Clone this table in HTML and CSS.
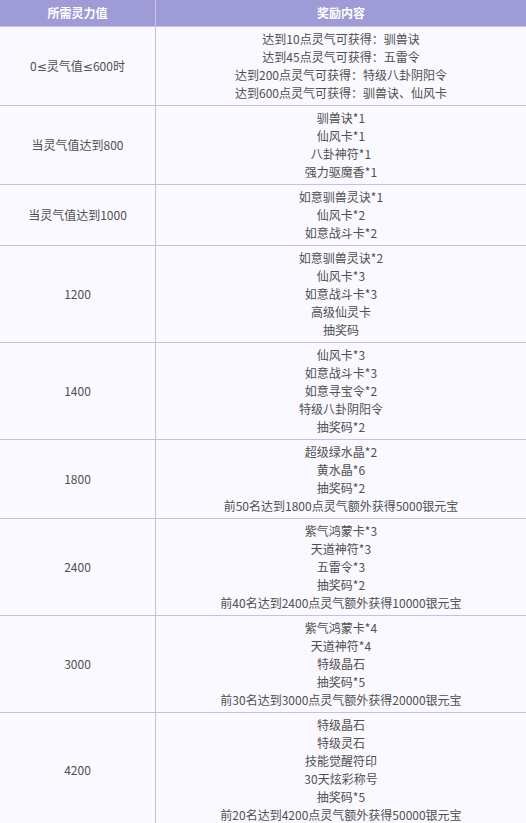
FILE: index.html
```html
<!DOCTYPE html>
<html lang="zh-CN">
<head>
<meta charset="utf-8">
<link rel="stylesheet" href="styles.css">
</head>
<body>
<table class="reward-table">
  <thead>
    <tr><th class="col-req">所需灵力值</th><th class="col-reward">奖励内容</th></tr>
  </thead>
  <tbody>
    <tr><td>0<span class="sym">≤</span>灵气值<span class="sym">≤</span>600时</td><td>达到10点灵气可获得：驯兽诀<br>达到45点灵气可获得：五雷令<br>达到200点灵气可获得：特级八卦阴阳令<br>达到600点灵气可获得：驯兽诀、仙风卡</td></tr>
    <tr><td>当灵气值达到800</td><td>驯兽诀*1<br>仙风卡*1<br>八卦神符*1<br>强力驱魔香*1</td></tr>
    <tr><td>当灵气值达到1000</td><td>如意驯兽灵诀*1<br>仙风卡*2<br>如意战斗卡*2</td></tr>
    <tr><td>1200</td><td>如意驯兽灵诀*2<br>仙风卡*3<br>如意战斗卡*3<br>高级仙灵卡<br>抽奖码</td></tr>
    <tr><td>1400</td><td>仙风卡*3<br>如意战斗卡*3<br>如意寻宝令*2<br>特级八卦阴阳令<br>抽奖码*2</td></tr>
    <tr><td>1800</td><td>超级绿水晶*2<br>黄水晶*6<br>抽奖码*2<br>前50名达到1800点灵气额外获得5000银元宝</td></tr>
    <tr><td>2400</td><td>紫气鸿蒙卡*3<br>天道神符*3<br>五雷令*3<br>抽奖码*2<br>前40名达到2400点灵气额外获得10000银元宝</td></tr>
    <tr><td>3000</td><td>紫气鸿蒙卡*4<br>天道神符*4<br>特级晶石<br>抽奖码*5<br>前30名达到3000点灵气额外获得20000银元宝</td></tr>
    <tr><td>4200</td><td>特级晶石<br>特级灵石<br>技能觉醒符印<br>30天炫彩称号<br>抽奖码*5<br>前20名达到4200点灵气额外获得50000银元宝</td></tr>
  </tbody>
</table>
</body>
</html>
```
FILE: styles.css
```css
html, body {
  margin: 0;
  padding: 0;
  background: #f9f9ff;
}
body {
  font-family: "Microsoft YaHei", "Noto Sans CJK SC", "Noto Sans", sans-serif;
  font-size: 12px;
  color: #505050;
}
.reward-table {
  width: 526px;
  border-collapse: collapse;
  table-layout: fixed;
}
.reward-table th {
  background: #9e9bd6;
  color: #fff;
  font-weight: bold;
  height: 26px;
  padding: 0;
  line-height: 26px;
  border-bottom: 1px solid #c6c4ec;
  text-align: center;
}
.reward-table th.col-req {
  width: 155px;
  border-right: 1px solid #c6c4ec;
}
.reward-table td {
  text-align: center;
  vertical-align: middle;
  padding: 3px 0;
  line-height: 18px;
  border-bottom: 1px solid #c3c1e8;
}
.reward-table td:first-child {
  border-right: 1px solid #c3c1e8;
}
.sym {
  font-family: "DejaVu Sans", sans-serif;
}
```
